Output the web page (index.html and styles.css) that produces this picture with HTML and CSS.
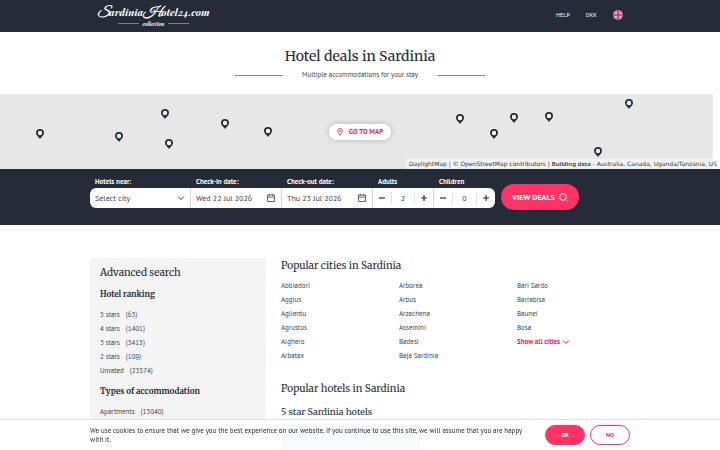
FILE: index.html
```html
<!DOCTYPE html>
<html lang="en">
<head>
<meta charset="utf-8">
<meta name="viewport" content="width=device-width, initial-scale=1">
<title>Hotel deals in Sardinia</title>
<link rel="stylesheet" href="styles.css">
</head>
<body>
<svg class="defs" aria-hidden="true">
  <symbol id="pin" viewBox="0 0 8 10"><path d="M4 0a4 4 0 0 0-4 4c0 2.400 2.300 3.400 4 6 1.700-2.600 4-3.600 4-6a4 4 0 0 0-4-4z" fill="#252b39"/><circle cx="4" cy="4" r="2.200" fill="#fff"/></symbol>
  <symbol id="calendar" viewBox="0 0 10 10"><path d="M1.500 2h7v6.500h-7zM1.500 4.200h7M3.300 .7V3M6.700 .7V3" fill="none" stroke="currentColor" stroke-width=".8"/></symbol>
  <symbol id="chevron" viewBox="0 0 8 6"><path d="M1 1.500l3 3 3-3" fill="none" stroke="currentColor"/></symbol>
  <symbol id="minus" viewBox="0 0 8 8"><path d="M1 4h6" stroke="currentColor" stroke-width="1.200"/></symbol>
  <symbol id="plus" viewBox="0 0 8 8"><path d="M1 4h6M4 1v6" stroke="currentColor" stroke-width="1.200"/></symbol>
</svg>
<header class="top">
  <div class="wrap top-row">
    <a class="logo" href="#"><span class="logo-name"><span class="cap">S</span>ardinia<span class="cap">H</span>otel24.com</span><span class="logo-sub">collection</span></a>
    <nav class="nav">
      <a href="#">HELP</a>
      <a href="#">DKK</a>
      <a class="flag" href="#" aria-label="English">
        <svg viewBox="0 0 10 10"><clipPath id="round"><circle cx="5" cy="5" r="5"/></clipPath><g clip-path="url(#round)"><path fill="#46528f" d="M0 0h10v10H0z"/><path d="M0 0l10 10M10 0L0 10" stroke="#e2c4d4" stroke-width="2"/><path d="M0 0l10 10M10 0L0 10" stroke="#c4456c" stroke-width=".7"/><path d="M5 0v10M0 5h10" stroke="#efd3de" stroke-width="3"/><path d="M5 0v10M0 5h10" stroke="#d92752" stroke-width="1.700"/></g></svg>
      </a>
    </nav>
  </div>
</header>
<section class="hero">
  <h1>Hotel deals in Sardinia</h1>
  <p class="tagline">Multiple accommodations for your stay</p>
</section>
<section class="map" aria-label="Map">
  <svg class="pin p1"><use href="#pin"/></svg>
  <svg class="pin p2"><use href="#pin"/></svg>
  <svg class="pin p3"><use href="#pin"/></svg>
  <svg class="pin p4"><use href="#pin"/></svg>
  <svg class="pin p5"><use href="#pin"/></svg>
  <svg class="pin p6"><use href="#pin"/></svg>
  <svg class="pin p7"><use href="#pin"/></svg>
  <svg class="pin p8"><use href="#pin"/></svg>
  <svg class="pin p9"><use href="#pin"/></svg>
  <svg class="pin p10"><use href="#pin"/></svg>
  <svg class="pin p11"><use href="#pin"/></svg>
  <svg class="pin p12"><use href="#pin"/></svg>
  <button class="go" type="button"><svg viewBox="0 0 6 8"><path d="M3 .5A2.400 2.400 0 0 0 .6 3C.6 4.800 2.200 5.500 3 7.300 3.800 5.500 5.400 4.800 5.400 3A2.400 2.400 0 0 0 3 .5z" fill="none" stroke="currentColor" stroke-width=".8"/><circle cx="3" cy="3" r=".9" fill="none" stroke="currentColor" stroke-width=".6"/></svg>GO TO MAP</button>
  <p class="credit">DaylightMap | © OpenStreetMap contributors | <b>Building data</b> - Australia, Canada, Uganda/Tanzania, US</p>
</section>
<section class="search">
  <form class="wrap form">
    <div class="field city"><label for="city">Hotels near:</label>
      <div class="box"><select id="city"><option>Select city</option></select><svg class="chev"><use href="#chevron"/></svg></div></div>
    <div class="field date"><label for="in">Check-in date:</label>
      <div class="box"><input id="in" type="text" value="Wed 22 Jul 2026"><svg class="cal"><use href="#calendar"/></svg></div></div>
    <div class="field date"><label for="out">Check-out date:</label>
      <div class="box"><input id="out" type="text" value="Thu 23 Jul 2026"><svg class="cal"><use href="#calendar"/></svg></div></div>
    <div class="field count"><label for="adults">Adults</label>
      <div class="box"><button type="button" aria-label="Fewer adults"><svg><use href="#minus"/></svg></button><input id="adults" type="text" value="2"><button type="button" aria-label="More adults"><svg><use href="#plus"/></svg></button></div></div>
    <div class="field count"><label for="children">Children</label>
      <div class="box"><button type="button" aria-label="Fewer children"><svg><use href="#minus"/></svg></button><input id="children" type="text" value="0"><button type="button" aria-label="More children"><svg><use href="#plus"/></svg></button></div></div>
    <button class="deals" type="submit">VIEW DEALS<svg viewBox="0 0 9 9"><circle cx="4" cy="4" r="3.300" fill="none" stroke="currentColor" stroke-width=".9"/><path d="M6.300 6.300l2.400 2.400" stroke="currentColor" stroke-width=".9"/></svg></button>
  </form>
</section>
<main class="wrap main">
  <aside class="side">
    <h2>Advanced search</h2>
    <h3>Hotel ranking</h3>
    <ul>
      <li><a href="#">5 stars <span>(63)</span></a></li>
      <li><a href="#">4 stars <span>(1401)</span></a></li>
      <li><a href="#">3 stars <span>(3415)</span></a></li>
      <li><a href="#">2 stars <span>(109)</span></a></li>
      <li><a href="#">Unrated <span>(23574)</span></a></li>
    </ul>
    <h3>Types of accommodation</h3>
    <ul>
      <li><a href="#">Apartments <span>(13040)</span></a></li>
    </ul>
  </aside>
  <div class="content">
    <h2>Popular cities in Sardinia</h2>
    <div class="cities">
      <ul><li><a href="#">Abbiadori</a></li><li><a href="#">Aggius</a></li><li><a href="#">Aglientu</a></li><li><a href="#">Agrustos</a></li><li><a href="#">Alghero</a></li><li><a href="#">Arbatax</a></li></ul>
      <ul><li><a href="#">Arborea</a></li><li><a href="#">Arbus</a></li><li><a href="#">Arzachena</a></li><li><a href="#">Assemini</a></li><li><a href="#">Badesi</a></li><li><a href="#">Baja Sardinia</a></li></ul>
      <ul><li><a href="#">Bari Sardo</a></li><li><a href="#">Barrabisa</a></li><li><a href="#">Baunei</a></li><li><a href="#">Bosa</a></li><li><a class="all" href="#">Show all cities<svg><use href="#chevron"/></svg></a></li></ul>
    </div>
    <h2>Popular hotels in Sardinia</h2>
    <h3>5 star Sardinia hotels</h3>
    <div class="photo"></div>
  </div>
</main>
<div class="cookies" role="region" aria-label="Cookies">
  <div class="wrap cookie-row">
    <p>We use cookies to ensure that we give you the best experience on our website. If you continue to use this site, we will assume that you are happy with it.</p>
    <button class="ok" type="button">OK</button>
    <button class="no" type="button">NO</button>
  </div>
</div>
</body>
</html>
```
FILE: styles.css
```css
* { box-sizing: border-box; }
body { margin: 0; background: #fff; color: #3d424e; font: 7px/14px "PT Sans", "Noto Sans", sans-serif; }
h1, h2, h3, p, ul { margin: 0; padding: 0; font-weight: 400; }
ul { list-style: none; }
a { color: inherit; text-decoration: none; }
button, input, select { font: inherit; color: inherit; border: 0; background: none; padding: 0; margin: 0; }
h1, h2, h3 { font-family: Merriweather, "DejaVu Serif", serif; color: #252b39; }
.defs { position: absolute; width: 0; height: 0; }
.wrap { width: 75%; max-width: 1080px; margin: 0 auto; }

.top { background: #252b39; color: #fff; }
.top-row { display: flex; justify-content: space-between; align-items: center; height: 32px; padding: 0 7px 2px; }
.logo { display: flex; flex-direction: column; align-items: center; font: italic bold 10px/16px "Playfair Display", "Liberation Serif", serif; }
.cap { font-family: "Great Vibes", "Lobster", "Playfair Display", "Liberation Serif", serif; font-size: 13px; }
.logo-sub { display: flex; align-items: center; gap: 4px; font-size: 5px; line-height: 6px; }
.logo-sub::before, .logo-sub::after { content: ""; width: 21px; height: 1px; background: #7c808a; }
.nav { display: flex; align-items: center; gap: 16px; font-size: 6px; }
.flag svg { display: block; width: 10px; height: 10px; }

.hero { text-align: center; padding: 14px 0 11px; }
h1 { font-size: 14px; line-height: 20px; }
.tagline { display: flex; justify-content: center; align-items: center; gap: 19px; padding-top: 1px; line-height: 16px; }
.tagline::before, .tagline::after { content: ""; width: 48px; height: 1px; background: #858b8d; }

.map { position: relative; display: flex; align-items: center; justify-content: center; height: 75px; background: linear-gradient(#e7e7e7, #e7e7e7) no-repeat 0 0 / 99% 100%; }
.pin { position: absolute; width: 8px; height: 10px; margin: -5px 0 0 -4px; }
.p1 { left: 5.6%; top: 53%; }
.p2 { left: 16.5%; top: 57%; }
.p3 { left: 22.9%; top: 26%; }
.p4 { left: 23.5%; top: 66%; }
.p5 { left: 31.3%; top: 40%; }
.p6 { left: 37.2%; top: 51%; }
.p7 { left: 63.9%; top: 33%; }
.p8 { left: 68.6%; top: 53%; }
.p9 { left: 71.4%; top: 32%; }
.p10 { left: 76.2%; top: 31%; }
.p11 { left: 87.4%; top: 13%; }
.p12 { left: 83.1%; top: 77%; }
.go { display: flex; align-items: center; gap: 6px; height: 16px; padding: 0 8px; border-radius: 8px; background: #fff; color: #d92757; font-weight: 700; box-shadow: 0 0 6px #0003; }
.go svg { width: 6px; height: 8px; }
.credit { position: absolute; right: 0; bottom: 0; padding: 0 3px; background: #ffffff80; font: 6px/10px "DejaVu Sans", sans-serif; color: #333; }
.credit b { font-family: "Noto Sans", sans-serif; font-weight: 600; }

.search { background: #252b39; padding: 6px 0 16px; }
.form { display: flex; align-items: flex-start; height: 34px; }
.field { min-width: 0; }
.field label { display: block; padding-left: 5px; color: #fff; font-weight: 700; line-height: 13px; white-space: nowrap; }
.box { display: flex; align-items: center; height: 20px; background: #fff; color: #3d424e; border-right: 1px solid #d5d6da; font-size: 8px; }
.city { flex: 0 0 101px; }
.date { flex: 0 0 91px; }
.count { flex: 0 0 61px; }
.city .box { border-radius: 6px 0 0 6px; padding: 0 5px; }
.city select { flex: 1; min-width: 0; appearance: none; }
.date .box { padding: 0 5px; }
.date input { flex: 1; min-width: 0; }
.chev { width: 8px; height: 6px; }
.cal { width: 10px; height: 10px; }
.count button { flex: 0 0 18px; height: 12px; display: flex; align-items: center; justify-content: center; color: #252b39; }
.count button svg { width: 8px; height: 8px; }
.count input { flex: 1; min-width: 0; height: 12px; text-align: center; border: solid #e3e4e7; border-width: 0 1px; }
.count:nth-of-type(5) .box { border-radius: 0 6px 6px 0; border-right: 0; }
.deals { display: flex; align-items: center; justify-content: center; gap: 4px; flex: 0 0 78px; height: 26px; margin: 9px 0 0 6px; border-radius: 13px; background: #ff3366; color: #fff; font-weight: 700; font-size: 8px; }
.deals svg { width: 9px; height: 9px; }

.main { display: flex; gap: 15px; padding-top: 33px; }
.side { flex: 0 0 176px; padding: 7px 10px 8px; background: #f4f4f5; }
h2 { font-size: 10px; line-height: 16px; }
h3 { font-size: 9px; line-height: 14px; }
.side h3 { margin: 6px 0; font-size: 8px; line-height: 15px; font-weight: 700; }
.side span { margin-left: 4px; }
.content { flex: 1; min-width: 0; }
.cities { display: grid; grid-template-columns: 1fr 1fr 1fr; column-gap: 5px; padding: 5px 0 18px; }
.all { display: inline-flex; align-items: center; gap: 2px; color: #e02658; font-weight: 700; }
.all svg { width: 8px; height: 6px; }
.content h3 { margin-top: 8px; }
.photo { width: 40%; height: 26px; margin-top: 5px; background: #8e9cd0; }

.cookies { position: fixed; left: 0; right: 0; bottom: 0; border-top: 1px solid #dfe0e2; background: #fffffff2; color: #252b39; }
.cookie-row { display: flex; align-items: flex-start; gap: 5px; height: 30px; padding-top: 5px; }
.cookie-row p { flex: 1; padding: 1px 12px 0 0; line-height: 9px; }
.cookie-row button { flex: 0 0 40px; height: 20px; border: 1px solid #ff3366; border-radius: 10px; font-size: 6px; font-weight: 700; color: #d92757; }
.cookie-row .ok { background: #ff3366; color: #fff; }
```
